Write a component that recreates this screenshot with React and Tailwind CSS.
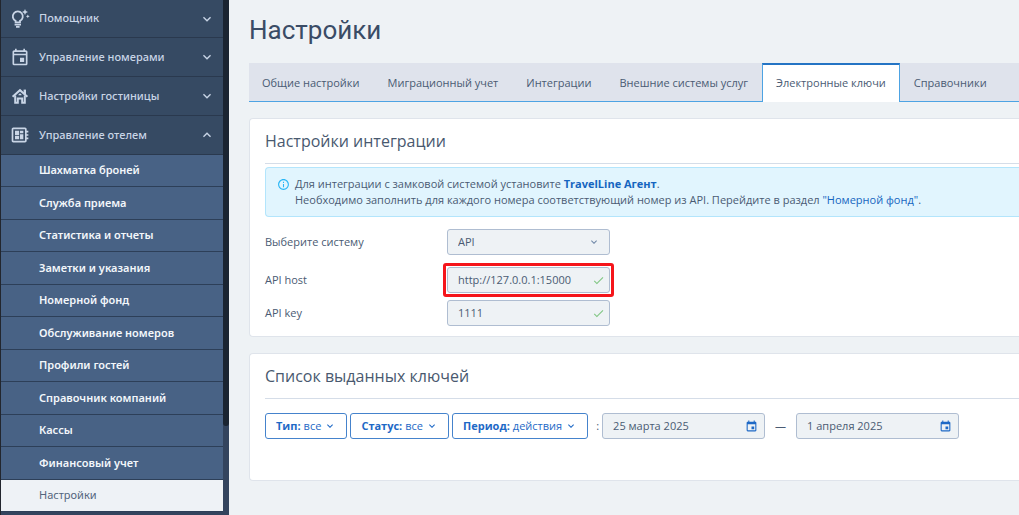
import React, { useState } from "react";
import {
    MdOutlineEvent,
    MdDeveloperBoard,
    MdExpandMore,
    MdExpandLess,
    MdInfoOutline,
    MdCheck,
    MdEvent,
} from "react-icons/md";

function BulbIcon({ className }) {
    return (
        <svg viewBox="0 0 20 20" fill="none" stroke="currentColor" strokeWidth="1.8" className={className}>
            <path d="M5.6 13.4v-1.5a5 5 0 1 1 4.4 0v1.5z" />
            <path d="M4.6 15.6h6.4M6 17.9h3.6" />
            <path d="M15 0l.9 2.1 2.1.9-2.1.9-.9 2.1-.9-2.1-2.1-.9 2.1-.9zM17.8 5.4l.6 1.3 1.3.6-1.3.6-.6 1.3-.6-1.3-1.3-.6 1.3-.6z" fill="currentColor" stroke="none" />
        </svg>
    );
}

function HouseIcon({ className }) {
    return (
        <svg viewBox="0 0 20 20" fill="none" stroke="currentColor" strokeWidth="2" className={className}>
            <path d="M2.6 10.8L10 4.2l7.4 6.6" />
            <path d="M14.8 8V3.6" strokeWidth="2.4" />
            <path d="M5.2 9.4v7.4h2.6v-4.4h4.4v4.4h2.6V9.4" />
            <path d="M8.4 9.2a1.6 1.6 0 0 1 3.2 0z" fill="currentColor" stroke="none" />
        </svg>
    );
}

const sections = [
    { label: "Помощник", Icon: BulbIcon },
    { label: "Управление номерами", Icon: MdOutlineEvent },
    { label: "Настройки гостиницы", Icon: HouseIcon },
    { label: "Управление отелем", Icon: MdDeveloperBoard, open: true },
];

const hotelLinks = [
    "Шахматка броней",
    "Служба приема",
    "Статистика и отчеты",
    "Заметки и указания",
    "Номерной фонд",
    "Обслуживание номеров",
    "Профили гостей",
    "Справочник компаний",
    "Кассы",
    "Финансовый учет",
    "Настройки",
];

const tabs = [
    "Общие настройки",
    "Миграционный учет",
    "Интеграции",
    "Внешние системы услуг",
    "Электронные ключи",
    "Справочники",
];

const filters = [
    { name: "Тип:", value: "все" },
    { name: "Статус:", value: "все" },
    { name: "Период:", value: "действия" },
];

function Sidebar() {
    return (
        <aside className="flex shrink-0 w-[229px] border-l border-[#22262e] bg-[#33445e]">
            <nav className="flex-1 font-['Noto_Sans','Open_Sans',sans-serif]">
                {sections.map(({ label, Icon, open }) => (
                    <button
                        key={label}
                        type="button"
                        aria-expanded={!!open}
                        className="flex items-center w-full h-[39px] first:h-[38px] pl-[9px] pr-2 border-b border-[#2a394e] bg-[#364a63] text-[#c9d5e6] text-left"
                    >
                        <Icon className="size-5 shrink-0" />
                        <span className="flex-1 ml-[9px] font-medium">{label}</span>
                        {open ? <MdExpandLess className="size-4" /> : <MdExpandMore className="size-4" />}
                    </button>
                ))}
                <ul>
                    {hotelLinks.map((label) => {
                        const active = label === "Настройки";
                        return (
                            <li key={label} className="odd:h-8 even:h-[33px] border-b border-[#2d3f58]">
                                <a
                                    href="#"
                                    className={`flex items-center h-full pl-[38px] ${active ? "bg-[#eef2f6] text-[#53657d]" : "bg-[#486285] text-[#f3f7fb] font-semibold"}`}
                                >
                                    {label}
                                </a>
                            </li>
                        );
                    })}
                </ul>
            </nav>
            {/* Scroll track */}
            <div className="w-[6px]">
                <div className="h-[426px] rounded-b-[3px] bg-[#1b2532]" />
            </div>
        </aside>
    );
}

function Card({ title, children }) {
    return (
        <section className="mt-4 pl-[15px] rounded-l border border-r-0 border-[#dfe4eb] bg-white">
            <h2 className="h-[45px] pt-2 border-b border-[#d5dde8] text-[16px] leading-7 text-[#49596f]">{title}</h2>
            {children}
        </section>
    );
}

function TextField({ id, value, onChange }) {
    return (
        <div className="flex items-center w-[163px] h-[26px] pl-[10px] pr-1 rounded-[3px] border border-[#afbdd1] bg-[#eef2f5]">
            <input id={id} value={value} onChange={onChange} className="flex-1 min-w-0 outline-none" />
            <MdCheck className="size-[13px] shrink-0 text-[#81c784]" />
        </div>
    );
}

function DateField({ label, defaultValue }) {
    return (
        <label className="flex items-center w-[163px] h-[26px] pl-[10px] pr-[6px] rounded-[3px] border border-[#afbdd1] bg-[#eef2f5]">
            <input aria-label={label} defaultValue={defaultValue} className="flex-1 min-w-0 outline-none" />
            <MdEvent className="size-[13px] shrink-0 text-[#1e69c6]" />
        </label>
    );
}

export default function App() {
    const [host, setHost] = useState("http://127.0.0.1:15000");
    const [apiKey, setApiKey] = useState("1111");

    return (
        <div className="flex min-h-screen overflow-hidden bg-[#eef2f5] font-['Open_Sans','Noto_Sans',sans-serif] text-[11px] text-[#4a5b73]">
            <Sidebar />
            <main className="flex-1 min-w-0 pl-5">
                <h1 className="h-[63px] pt-3 font-['Roboto',sans-serif] text-[26px] leading-9 text-[#3a4c66]">Настройки</h1>

                <div role="tablist" className="flex h-[39px] bg-[#dfe3ec]">
                    {tabs.map((tab) => {
                        const active = tab === "Электронные ключи";
                        return (
                            <button
                                key={tab}
                                type="button"
                                role="tab"
                                aria-selected={active}
                                className={`shrink-0 whitespace-nowrap first:pl-[13px] ${active ? "px-[13px] border-x border-t-2 border-x-[#4da3e3] border-t-[#2474c4] bg-white" : "px-[14px] pt-[2px] border-b border-[#4da3e3]"}`}
                            >
                                {tab}
                            </button>
                        );
                    })}
                    <div className="flex-1 border-b border-[#4da3e3]" />
                </div>

                <Card title="Настройки интеграции">
                    <div className="flex mt-[3px] h-[50px] pl-[11px] pt-2 rounded-l border border-r-0 border-[#b3e5fc] bg-[#e1f5fe] leading-4">
                        <MdInfoOutline className="size-[13px] mt-[2px] mr-[5px] shrink-0 text-[#29b6f6]" />
                        <div className="whitespace-nowrap">
                            <p>
                                Для интеграции с замковой системой установите{" "}
                                <a href="#" className="font-bold text-[#1565c0]">TravelLine Агент</a>.
                            </p>
                            <p>
                                Необходимо заполнить для каждого номера соответствующий номер из API. Перейдите в раздел{" "}
                                <a href="#" className="text-[#1565c0]">"Номерной фонд"</a>.
                            </p>
                        </div>
                    </div>

                    <div className="pt-3 pb-[10px]">
                        <div className="flex items-center mb-2">
                            <label htmlFor="system" className="w-[182px]">Выберите систему</label>
                            <div className="relative w-[163px]">
                                <select id="system" className="appearance-none w-full h-[26px] px-[10px] rounded-[3px] border border-[#afbdd1] bg-[#eef2f5]">
                                    <option>API</option>
                                </select>
                                <MdExpandMore className="absolute right-[10px] top-[7px] size-3 pointer-events-none text-[#7088a8]" />
                            </div>
                        </div>
                        <div className="flex items-center">
                            <label htmlFor="host" className="w-[178px]">API host</label>
                            <div className="p-px rounded-[3px] border-[3px] border-[#f5151b]">
                                <TextField id="host" value={host} onChange={(e) => setHost(e.target.value)} />
                            </div>
                        </div>
                        <div className="flex items-center mt-[3px]">
                            <label htmlFor="key" className="w-[182px]">API key</label>
                            <TextField id="key" value={apiKey} onChange={(e) => setApiKey(e.target.value)} />
                        </div>
                    </div>
                </Card>

                <Card title="Список выданных ключей">
                    <div className="flex items-center pt-[14px] pb-[41px]">
                        <div className="flex gap-[3px]">
                            {filters.map((f) => (
                                <button
                                    key={f.name}
                                    type="button"
                                    className="flex items-center h-[26px] px-[10px] rounded-[3px] border border-[#4583cc] bg-white text-[#1e69c6] whitespace-nowrap"
                                >
                                    <b className="mr-[3px]">{f.name}</b>
                                    {f.value}
                                    <MdExpandMore className="size-3 ml-[3px]" />
                                </button>
                            ))}
                        </div>
                        <span className="ml-2 mr-[3px]">:</span>
                        <DateField label="Начало периода" defaultValue="25 марта 2025" />
                        <span className="mx-[10px]">—</span>
                        <DateField label="Конец периода" defaultValue="1 апреля 2025" />
                    </div>
                </Card>
            </main>
        </div>
    );
}
